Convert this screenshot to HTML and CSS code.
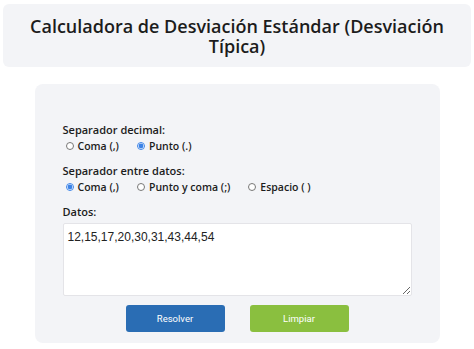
FILE: index.html
```html
<!DOCTYPE html>
<html lang="es">
<head>
  <meta charset="UTF-8">
  <meta name="viewport" content="width=device-width, initial-scale=1.0">
  <title>Calculadora de Desviación Estándar</title>
  <link rel="stylesheet" href="styles.css">
</head>
<body>

<header class="title-box">
  <h1>Calculadora de Desviación Estándar (Desviación Típica)</h1>
</header>

<form class="calc-card" id="calcForm">
  <div class="field">
    <span class="field-label">Separador decimal:</span>
    <div class="options">
      <label class="option"><input type="radio" name="decimal" value="coma"> Coma (,)</label>
      <label class="option"><input type="radio" name="decimal" value="punto" checked> Punto (.)</label>
    </div>
  </div>

  <div class="field">
    <span class="field-label">Separador entre datos:</span>
    <div class="options">
      <label class="option"><input type="radio" name="sep" value="coma" checked> Coma (,)</label>
      <label class="option"><input type="radio" name="sep" value="puntocoma"> Punto y coma (;)</label>
      <label class="option"><input type="radio" name="sep" value="espacio"> Espacio ( )</label>
    </div>
  </div>

  <div class="field">
    <label class="field-label" for="datos">Datos:</label>
    <textarea id="datos">12,15,17,20,30,31,43,44,54</textarea>
  </div>

  <div class="actions">
    <button type="button" class="btn solve">Resolver</button>
    <button type="reset" class="btn clear">Limpiar</button>
  </div>
</form>

</body>
</html>
```
FILE: styles.css
```css
body {
  font-family: "Open Sans", Arial, sans-serif;
  margin: 4px 3px;
  color: #1c1c1c;
}
.title-box {
  background-color: #f3f4f7;
  border-radius: 6px;
  padding: 12px 10px 11px;
}
h1 {
  margin: 0;
  font-size: 18px;
  font-weight: 600;
  line-height: 20px;
  text-align: center;
}
.calc-card {
  width: 349px;
  margin: 17px auto 0;
  padding: 38px 28px 11px;
  background-color: #f3f4f7;
  border-radius: 8px;
}
.field {
  margin-bottom: 9px;
}
.field-label {
  display: block;
  font-size: 11px;
  font-weight: 600;
  line-height: 16px;
}
.options {
  display: flex;
  gap: 15px;
}
.option {
  display: flex;
  align-items: center;
  font-size: 10.5px;
  font-weight: 600;
  line-height: 16px;
}
.option input {
  width: 8px;
  height: 8px;
  margin: 0 4px 0 3px;
  accent-color: #3b82e6;
}
textarea {
  display: block;
  width: 100%;
  height: 73px;
  box-sizing: border-box;
  margin-top: 3px;
  padding: 6px 4px;
  border: 1px solid #e4e4e8;
  border-radius: 2px;
  font-family: Arial, "Liberation Sans", sans-serif;
  font-size: 12px;
  color: #222;
  resize: vertical;
}
.actions {
  display: flex;
  justify-content: center;
  gap: 25px;
  margin-top: 3px;
}
.btn {
  width: 99px;
  height: 27px;
  border: none;
  border-radius: 3px;
  color: white;
  font-family: Roboto, sans-serif;
  font-size: 9.5px;
  cursor: pointer;
}
.solve {
  background-color: #2a6db4;
}
.clear {
  background-color: #8abf3f;
}
```
